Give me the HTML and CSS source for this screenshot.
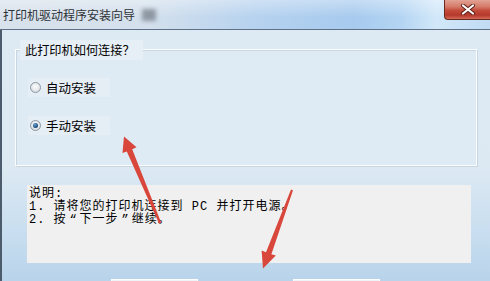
FILE: index.html
```html
<!DOCTYPE html>
<html lang="zh">
<head>
<meta charset="utf-8">
<title>打印机驱动程序安装向导</title>
<link rel="stylesheet" href="styles.css">
</head>
<body>
<div class="window">
  <div class="titlebar">
    <span class="title">打印机驱动程序安装向导</span>
    <span class="blur"></span>
    <span class="close">
      <svg width="16" height="11" viewBox="0 0 16 11"><path d="M3 1.5 L13 9.5 M13 1.5 L3 9.5" stroke="#5a1c16" stroke-width="4" stroke-linecap="round"/><path d="M3 1.5 L13 9.5 M13 1.5 L3 9.5" stroke="#ffffff" stroke-width="2.2" stroke-linecap="round"/></svg>
    </span>
  </div>
  <div class="content">
    <div class="group">
      <div class="group-title">此打印机如何连接？</div>
      <div class="options">
        <div class="option"><span class="radio"></span><span class="opt-text">自动安装</span></div>
        <div class="option"><span class="radio checked"></span><span class="opt-text">手动安装</span></div>
      </div>
    </div>
    <div class="desc">
      <div class="line">说明:</div>
      <div class="line">1. 请将您的打印机连接到 PC 并打开电源。</div>
      <div class="line">2. 按<span class="q">“</span>下一步<span class="q">”</span>继续。</div>
    </div>
    <div class="buttons">
      <span class="btn"></span>
      <span class="btn"></span>
    </div>
  </div>
</div>
<svg class="arrows" width="490" height="281" viewBox="0 0 490 281">
  <polygon points="124,136.5 136.5,147.2 132.2,149.2 161.2,222.8 159,223.6 126.8,151.4 122.5,153" fill="#d9463b"/>
  <polygon points="263,268.5 275.8,255.5 271.4,254.2 293,190.2 291,189.6 266,252.3 261.6,250.4" fill="#d9463b"/>
</svg>
</body>
</html>
```

FILE: styles.css
```css
html, body {
  margin: 0;
  padding: 0;
}
body {
  width: 490px;
  height: 281px;
  overflow: hidden;
  position: relative;
  font-family: "Noto Sans CJK SC", "Noto Sans", sans-serif;
  background: #dde9f3;
}
.window {
  width: 490px;
  height: 281px;
  display: flex;
  flex-direction: column;
}
.titlebar {
  height: 29px;
  flex: none;
  display: flex;
  align-items: flex-start;
  border-bottom: 1px solid #5f7186;
  background:
    linear-gradient(to bottom, rgba(255,255,255,0.35) 0%, rgba(255,255,255,0) 60%),
    linear-gradient(to right, #d8e2ec 0%, #d4e0ec 30%, #b6d2ef 52%, #a7caee 72%, #b4d5f3 82%, #d2e8f9 89%, #c0dbf3 100%);
}
.title {
  margin-top: 8px;
  margin-left: 3px;
  font-size: 12px;
  line-height: 14px;
  color: #2e3236;
}
.blur {
  margin-top: 9px;
  margin-left: 7px;
  width: 14px;
  height: 12px;
  background: #8e98a3;
  filter: blur(2px);
}
.close {
  margin-left: auto;
  width: 45px;
  height: 19px;
  border: 1px solid #6a2a22;
  border-top: none;
  border-right: none;
  border-radius: 0 0 0 4px;
  background: linear-gradient(to bottom, #e2a293 0%, #d57b6a 35%, #c44b3b 55%, #b5392c 80%, #d46a57 100%);
  display: flex;
  align-items: center;
  justify-content: center;
}
.close svg {
  display: block;
}
.content {
  flex: 1;
  border-left: 2px solid #4c5c6d;
  padding-left: 13px;
  display: flex;
  flex-direction: column;
  background: linear-gradient(to bottom, #dde9f3 0%, #dce9f3 55%, #c9def0 80%, #b8d3ea 100%);
  overflow: hidden;
}
.group {
  margin-top: 19px;
  width: 460px;
  height: 115px;
  border: 1px solid #fbfdfe;
  box-shadow: inset 1px 1px 0 #c9d6e2, 1px 1px 0 #c9d6e2;
  background: #deeaf4;
  flex: none;
}
.group-title {
  margin-top: -10px;
  margin-left: 4px;
  width: fit-content;
  height: 20px;
  padding: 0 8px 0 5px;
  background: #e7eff6;
  font-size: 12.2px;
  line-height: 20px;
  color: #000;
}
.options {
  margin-top: 18px;
  margin-left: 12px;
  display: flex;
  flex-direction: column;
  gap: 19px;
}
.option {
  width: 80px;
  height: 19px;
  padding-left: 2px;
  display: flex;
  align-items: center;
  gap: 5px;
  background: #e5edf5;
}
.radio {
  width: 9px;
  height: 9px;
  border-radius: 50%;
  border: 1px solid #8c97a3;
  background: radial-gradient(circle at 50% 40%, #fdfdfd 0%, #e2e5e8 60%, #c9cfd5 100%);
  flex: none;
  display: flex;
  align-items: center;
  justify-content: center;
}
.radio.checked::after {
  content: "";
  width: 5px;
  height: 5px;
  border-radius: 50%;
  background: radial-gradient(circle at 40% 35%, #6da6d6 0%, #1d4f7e 60%, #0f3359 100%);
}
.opt-text {
  font-size: 12.5px;
  line-height: 16px;
  color: #000;
}
.desc {
  margin-top: 19px;
  margin-left: 12px;
  width: 442px;
  height: 75px;
  padding: 3px 0 0 2px;
  background: #f0f0f0;
  flex: none;
  font-family: "Liberation Mono", "Noto Sans CJK SC", monospace;
  font-size: 12px;
  letter-spacing: 1px;
  line-height: 13px;
  color: #000;
}
.line {
  white-space: pre;
}
.q {
  display: inline-block;
  width: 13px;
  height: 13px;
  line-height: 13px;
  text-align: center;
  vertical-align: top;
  letter-spacing: 0;
}
.buttons {
  margin-top: 16px;
  margin-left: 96px;
  display: flex;
  gap: 95px;
  flex: none;
}
.btn {
  width: 85px;
  height: 22px;
  border: 1px solid #ffffff;
  background: #eef3f8;
}
.arrows {
  position: absolute;
  left: 0;
  top: 0;
  pointer-events: none;
}
```
